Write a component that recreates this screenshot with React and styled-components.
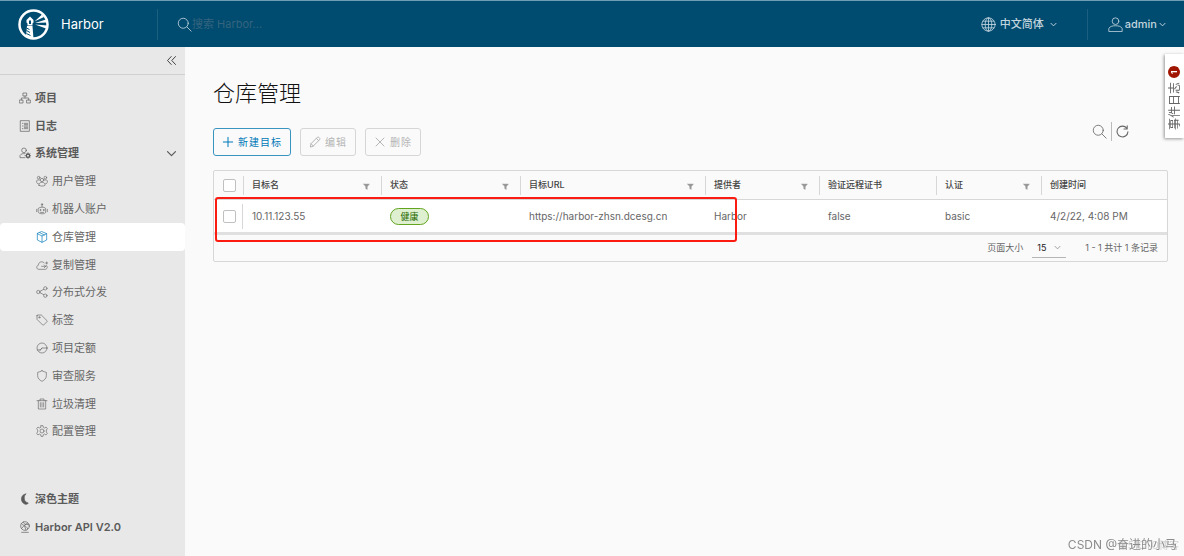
import React from 'react';
import styled, { createGlobalStyle, css } from 'styled-components';

const GlobalStyle = createGlobalStyle`
  *, *::before, *::after { box-sizing: border-box; }
  body {
    margin: 0;
    background: #fafafa;
    color: #666;
    font-family: Inter, "Noto Sans CJK SC", sans-serif;
    font-size: 11px;
    line-height: 16px;
  }
  button, input, select { font: inherit; color: inherit; margin: 0; }
  button { border: 0; background: none; padding: 0; cursor: pointer; }
  a { color: inherit; text-decoration: none; }
`;

const Svg = styled.svg`
  flex: none;
  display: block;
  width: ${(p) => p.$size || 12}px;
  height: ${(p) => p.$size || 12}px;
  fill: none;
  stroke: currentColor;
  stroke-width: ${(p) => p.$weight || 2};
  stroke-linecap: round;
  stroke-linejoin: round;
`;

const shapes = {
  organization: <><rect x="13" y="3" width="10" height="9" /><rect x="2" y="24" width="10" height="9" /><rect x="24" y="24" width="10" height="9" /><path d="M18 12v6M7 24v-6h22v6" /></>,
  list: <><rect x="5" y="2" width="26" height="32" /><path d="M10 10h2M10 18h2M10 26h2M16 10h10M16 14h10M16 18h10M16 22h10M16 26h10" strokeWidth="2" /></>,
  admin: <><circle cx="15" cy="10" r="7" /><path d="M17 32H3v-7c3-4 8-6 14-5" /><circle cx="27" cy="26" r="5" strokeWidth="4" /><path d="M27 17v3M27 32v3M18 26h3M33 26h3M21 20l2 2M31 30l2 2M21 32l2-2M31 22l2-2" /></>,
  users: <><circle cx="18" cy="15" r="5" /><circle cx="8" cy="8" r="4" /><circle cx="28" cy="8" r="4" /><path d="M9 31v-4c2-4 5-5 9-5s7 1 9 5v4c-5 3-13 3-18 0zM2 22v-5c2-2 5-3 9-2M34 22v-5c-2-2-5-3-9-2M4 25l3 1M32 25l-3 1" /></>,
  robot: <><path d="M7 16c5-5 17-5 22 0v12c-2 6-20 6-22 0zM18 12V6M2 19v7M34 19v7M13 28c3 1 7 1 10 0" /><circle cx="18" cy="4" r="2" /><circle cx="13" cy="21" r="1.5" /><circle cx="23" cy="21" r="1.5" /></>,
  cube: <path d="M18 2L32 8v19L18 34 4 27V8zM4 8l14 7 14-7M18 15v19M11 5l14 7" />,
  cloud: <><path d="M31 19c6 5 2 12-4 12H8C1 31 0 20 7 19c0-11 13-14 18-7" /><path d="M17 22h12M25 18l4 4-4 4M29 12h6M32 9v6" /></>,
  share: <><circle cx="7" cy="18" r="5" /><circle cx="28" cy="7" r="5" /><circle cx="28" cy="29" r="5" /><path d="M12 16l11-6M12 20l11 6" /></>,
  tag: <><path d="M3 5v11l17 17c1 1 2 1 3 0l10-10c1-1 1-2 0-3L16 3H5c-1 0-2 1-2 2z" /><circle cx="10" cy="10" r="2" /></>,
  gauge: <><circle cx="18" cy="18" r="15" /><path d="M4 24l9-1 5-5h15M11 27l7-9" /></>,
  shield: <path d="M18 2c4 3 9 4 13 5v10c0 8-5 13-13 17C10 30 5 25 5 17V7c4-1 9-2 13-5z" />,
  trash: <path d="M3 8h30M7 8v25h22V8M12 8V3h12v5M13 14v13M18 14v13M23 14v13" />,
  cog: <><path d="M15 2h6l1 5 4 2 4-3 4 5-3 4v6l3 4-4 5-5-3-3 2-1 5h-6l-1-5-4-2-4 3-4-5 3-4v-6l-3-4 4-5 5 3 3-2z" /><circle cx="18" cy="18" r="6" /></>,
  moon: <path d="M20 3C4 5 3 27 17 33c5 2 9 0 11-3C15 28 12 12 20 3z" fill="currentColor" />,
  api: <><circle cx="18" cy="15" r="13" /><path d="M7 8c5 7 13 3 19 15M8 22l8-9 10-7M13 3c-1 5 6 8 17 8M17 16l4 11M8 34h20" /></>,
  search: <><circle cx="15" cy="15" r="12" /><path d="M24 24l10 10" /></>,
  globe: <><circle cx="18" cy="18" r="16" /><ellipse cx="18" cy="18" rx="8" ry="16" /><path d="M18 2v32M2 18h32M5 10h26M5 26h26" /></>,
  user: <><circle cx="18" cy="10" r="8" /><path d="M2 34v-7c4-5 9-6 16-6s12 1 16 6v7z" /></>,
  chevron: <path d="M5 12l13 13 13-13" />,
  collapse: <path d="M17 5L5 18l12 13M31 5L19 18l12 13" />,
  refresh: <path d="M30 9A15 15 0 1 0 33 19M31 2v9h-9" />,
  plus: <path d="M18 4v28M4 18h28" />,
  pencil: <path d="M4 32l2-9L26 3c2-1 8 4 7 7L13 30zM22 7l7 7M6 23l7 7" />,
  times: <path d="M6 6l24 24M30 6L6 30" />,
  filter: <path d="M3 5h30L22 19v14l-8-4V19z" fill="currentColor" />,
};

function Icon({ name, size, weight }) {
  return <Svg viewBox="0 0 36 36" $size={size} $weight={weight} aria-hidden="true">{shapes[name]}</Svg>;
}

const Header = styled.header`
  display: flex;
  align-items: center;
  height: 47px;
  background: #004b70;
  border-top: 1px solid #6f9db3;
  color: #c3d5de;
`;

const Brand = styled.a`
  display: flex;
  align-items: center;
  gap: 12px;
  width: 157px;
  padding-left: 18px;
  color: #fff;
  font-size: 13px;
`;

const Logo = styled.svg`
  width: 31px;
  height: 31px;
`;

const Divider = styled.span`
  width: 1px;
  height: 31px;
  background: #1c5f80;
`;

const SearchBox = styled.label`
  display: flex;
  flex: 1;
  align-items: center;
  padding-left: 19px;
`;

const SearchInput = styled.input`
  width: 160px;
  padding: 0;
  border: 0;
  outline: 0;
  background: none;
  &::placeholder { color: #35647e; opacity: 1; }
`;

const HeaderMenu = styled.button`
  display: flex;
  align-items: center;
  gap: ${(p) => p.$gap}px;
  margin-right: ${(p) => p.$end}px;
  margin-left: 20px;
  font-weight: 500;
`;

const MenuText = styled.span`
  margin-right: ${(p) => p.$space || 0}px;
`;

const Body = styled.div`
  display: flex;
  min-height: calc(100vh - 47px);
`;

const Sidebar = styled.aside`
  display: flex;
  flex: none;
  flex-direction: column;
  width: 185px;
  background: #e8e8e8;
`;

const CollapseBar = styled.div`
  display: flex;
  align-items: center;
  justify-content: flex-end;
  height: 28px;
  padding-right: 8px;
  border-bottom: 1px solid #d0d0d0;
  color: #333;
`;

const Nav = styled.nav`
  display: grid;
  grid-auto-rows: 1fr;
  height: 65vh;
  min-height: 338px;
  margin-top: 9px;
`;

const NavFooter = styled.nav`
  display: grid;
  grid-auto-rows: 28px;
  margin-top: auto;
  padding-bottom: 15px;
`;

const NavItem = styled.a`
  display: flex;
  align-items: center;
  gap: 4px;
  padding: 0 8px 0 19px;
  color: #5a5a5a;
  font-weight: 600;
  ${(p) => p.$sub && css`
    padding-left: 36px;
    color: #666;
    font-weight: 400;
  `}
  ${(p) => p.$active && css`
    border-radius: 4px;
    background: #fff;
    svg { color: #0079b8; }
  `}
`;

const NavText = styled.span`
  flex: 1;
`;

const Main = styled.main`
  flex: 1;
  min-width: 0;
  padding: 30px 16px 0 28px;
`;

const Title = styled.h1`
  margin: 0;
  color: #111;
  font-size: 22px;
  font-weight: 300;
  line-height: 32px;
`;

const Toolbar = styled.div`
  display: flex;
  align-items: center;
  gap: 9px;
  margin: 19px 0 14px;
`;

const ActionButton = styled.button`
  display: flex;
  align-items: center;
  justify-content: center;
  gap: 4px;
  height: 28px;
  padding: 0 8px;
  border: 1px solid #3a94c0;
  border-radius: 3px;
  color: #0079b8;
  font-size: 10px;
  letter-spacing: 1px;
  &:disabled {
    border-color: #d6d6d6;
    color: #b5b5b5;
  }
`;

const Tools = styled.div`
  display: flex;
  align-self: flex-start;
  gap: 4px;
  margin: -6px 39px 0 auto;
  align-items: center;
`;

const ToolDivider = styled.span`
  width: 1px;
  height: 19px;
  background: #bbb;
`;

const Grid = styled.section`
  position: relative;
  border: 1px solid #d7d7d7;
  border-radius: 2px;
`;

const Table = styled.table`
  width: 100%;
  table-layout: fixed;
  border-collapse: separate;
  border-spacing: 0;
`;

const HeadCell = styled.th`
  height: 29px;
  padding: 0;
  border-bottom: 1px solid #d7d7d7;
  color: #444;
  font-size: 9px;
  font-weight: 500;
  text-align: left;
`;

const HeadContent = styled.div`
  display: flex;
  align-items: center;
  justify-content: space-between;
  height: 19px;
  padding: 0 11px 0 8px;
  border-left: 1px solid #d7d7d7;
  svg { color: #999; margin-top: 2px; }
`;

const Cell = styled.td`
  height: 35px;
  padding: 0 0 0 9px;
  border-bottom: 3px solid #e0e0e0;
  background: #fff;
  color: #666;
  font-size: 10px;
`;

const CheckSlot = styled.div`
  display: flex;
  align-items: center;
  height: 25px;
  border-right: ${(p) => (p.$line ? '1px solid #d7d7d7' : '0')};
  padding-left: ${(p) => (p.$line ? 0 : 9)}px;
`;

const Checkbox = styled.input`
  appearance: none;
  flex: none;
  width: 13px;
  height: 13px;
  margin: 0;
  border: 1px solid #c0c0c0;
  border-radius: 2px;
  background: #fff;
`;

const Status = styled.span`
  display: inline-block;
  width: 39px;
  border: 1px solid #62a420;
  border-radius: 9px;
  background: #dff0d0;
  color: #266900;
  font-size: 9px;
  line-height: 15px;
  text-align: center;
`;

const GridFooter = styled.footer`
  display: flex;
  align-items: center;
  justify-content: flex-end;
  height: 26px;
  padding-right: 9px;
  color: #666;
  font-size: 9px;
`;

const PageSize = styled.label`
  display: flex;
  align-items: center;
  gap: 9px;
  margin-right: 19px;
`;

const SelectWrap = styled.span`
  display: flex;
  align-items: center;
  width: 34px;
  height: 20px;
  border-bottom: 1px solid #b5b5b5;
  svg { margin-left: -12px; pointer-events: none; color: #888; }
`;

const Select = styled.select`
  appearance: none;
  width: 34px;
  padding: 0 0 0 5px;
  border: 0;
  outline: 0;
  background: none;
  color: #222;
`;

const Highlight = styled.div`
  position: absolute;
  top: 26px;
  left: 1px;
  width: 522px;
  height: 45px;
  border: 2px solid #fb1b10;
  border-radius: 3px;
  pointer-events: none;
`;

const EventTab = styled.button`
  position: fixed;
  top: 54px;
  right: 0;
  display: flex;
  align-items: center;
  gap: 4px;
  width: 19px;
  padding: 8px 0 12px;
  background: #fff;
  box-shadow: 1px -1px 3px rgba(0, 0, 0, 0.4);
  writing-mode: vertical-rl;
  text-orientation: sideways;
  transform: rotate(180deg);
  font-size: 12px;
  line-height: 19px;
`;

const Badge = styled.span`
  width: 12px;
  height: 12px;
  border-radius: 50%;
  background: #a01500;
  color: #fff;
  font-size: 8px;
  font-weight: 700;
  line-height: 12px;
  text-align: center;
`;

const Watermark = styled.div`
  position: fixed;
  right: 7px;
  bottom: 2px;
  color: #8c8c8c;
  font-size: 12px;
  line-height: 18px;
`;

const GhostMark = styled(Watermark)`
  right: 5px;
  color: #d0d0d0;
  font-size: 10px;
`;

const mainNav = [
  { icon: 'organization', text: '项目' },
  { icon: 'list', text: '日志' },
  { icon: 'admin', text: '系统管理', open: true },
  { icon: 'users', text: '用户管理', sub: true },
  { icon: 'robot', text: '机器人账户', sub: true },
  { icon: 'cube', text: '仓库管理', sub: true, active: true },
  { icon: 'cloud', text: '复制管理', sub: true },
  { icon: 'share', text: '分布式分发', sub: true },
  { icon: 'tag', text: '标签', sub: true },
  { icon: 'gauge', text: '项目定额', sub: true },
  { icon: 'shield', text: '审查服务', sub: true },
  { icon: 'trash', text: '垃圾清理', sub: true },
  { icon: 'cog', text: '配置管理', sub: true },
];

const footNav = [
  { icon: 'moon', text: '深色主题' },
  { icon: 'api', text: 'Harbor API V2.0' },
];

const columns = [
  { text: '目标名', width: 138, filter: true },
  { text: '状态', width: 139, filter: true },
  { text: '目标URL', width: 185, filter: true },
  { text: '提供者', width: 114, filter: true },
  { text: '验证远程证书', width: 117 },
  { text: '认证', width: 105, filter: true },
  { text: '创建时间', width: 126 },
];

function NavEntry({ item }) {
  return (
    <NavItem href="#" $sub={item.sub} $active={item.active} aria-current={item.active ? 'page' : undefined}>
      <Icon name={item.icon} />
      <NavText>{item.text}</NavText>
      {item.open && <Icon name="chevron" size={11} weight={4} />}
    </NavItem>
  );
}

export default function App() {
  return (
    <>
      <GlobalStyle />
      <Header>
        <Brand href="#">
          <Logo viewBox="0 0 62 62" aria-hidden="true">
            <circle cx="31" cy="31" r="28" fill="none" stroke="#fff" strokeWidth="5" />
            <path d="M17 27v-5l7-7 7 7v5l-2 2v4H19v-4z" fill="#fff" />
            <path d="M22 23h4v7h-4z" fill="#004b70" />
            <path d="M18 34h11l2 26-15-5z" fill="#fff" />
            <path d="M17 38l6 3M17 43l7 4M17 49l8 4" stroke="#004b70" strokeWidth="2" />
            <path d="M33 25l15-14 4 5zM34 28l22-7 2 6zM34 31l25 2-3 6z" fill="#fff" />
          </Logo>
          Harbor
        </Brand>
        <Divider />
        <SearchBox>
          <Icon name="search" size={15} weight={2} />
          <SearchInput type="search" placeholder="搜索 Harbor..." aria-label="搜索 Harbor" />
        </SearchBox>
        <HeaderMenu type="button" $gap={4} $end={30}>
          <Icon name="globe" size={15} />
          <MenuText $space={2}>中文简体</MenuText>
          <Icon name="chevron" size={7} weight={5} />
        </HeaderMenu>
        <Divider />
        <HeaderMenu type="button" $gap={2} $end={18}>
          <Icon name="user" size={15} />
          <MenuText>admin</MenuText>
          <Icon name="chevron" size={7} weight={5} />
        </HeaderMenu>
      </Header>
      <Body>
        <Sidebar>
          <CollapseBar>
            <button type="button" aria-label="收起"><Icon name="collapse" size={11} weight={3} /></button>
          </CollapseBar>
          <Nav>{mainNav.map((item) => <NavEntry key={item.text} item={item} />)}</Nav>
          <NavFooter>{footNav.map((item) => <NavEntry key={item.text} item={item} />)}</NavFooter>
        </Sidebar>
        <Main>
          <Title>仓库管理</Title>
          <Toolbar>
            <ActionButton type="button"><Icon name="plus" weight={3} />新建目标</ActionButton>
            <ActionButton type="button" disabled><Icon name="pencil" weight={3} />编辑</ActionButton>
            <ActionButton type="button" disabled><Icon name="times" weight={3} />删除</ActionButton>
            <Tools>
              <button type="button" aria-label="搜索"><Icon name="search" size={15} /></button>
              <ToolDivider />
              <button type="button" aria-label="刷新"><Icon name="refresh" size={13} weight={3} /></button>
            </Tools>
          </Toolbar>
          <Grid>
            <Table>
              <colgroup>
                <col width="29" />
                {columns.map((c) => <col key={c.text} width={c.width} />)}
              </colgroup>
              <thead>
                <tr>
                  <HeadCell>
                    <CheckSlot><Checkbox type="checkbox" aria-label="全选" /></CheckSlot>
                  </HeadCell>
                  {columns.map((c) => (
                    <HeadCell key={c.text}>
                      <HeadContent>{c.text}{c.filter && <Icon name="filter" size={7} />}</HeadContent>
                    </HeadCell>
                  ))}
                </tr>
              </thead>
              <tbody>
                <tr>
                  <Cell><CheckSlot $line><Checkbox type="checkbox" aria-label="选择 10.11.123.55" /></CheckSlot></Cell>
                  <Cell>10.11.123.55</Cell>
                  <Cell><Status>健康</Status></Cell>
                  <Cell>https://harbor-zhsn.dcesg.cn</Cell>
                  <Cell>Harbor</Cell>
                  <Cell>false</Cell>
                  <Cell>basic</Cell>
                  <Cell>4/2/22, 4:08 PM</Cell>
                </tr>
              </tbody>
            </Table>
            <GridFooter>
              <PageSize>
                页面大小
                <SelectWrap>
                  <Select defaultValue="15"><option>15</option><option>25</option><option>50</option></Select>
                  <Icon name="chevron" size={7} weight={4} />
                </SelectWrap>
              </PageSize>
              1 - 1 共计 1 条记录
            </GridFooter>
            <Highlight />
          </Grid>
        </Main>
      </Body>
      <EventTab type="button">事件日志<Badge>1</Badge></EventTab>
      <GhostMark>@51CTO博客</GhostMark>
      <Watermark>CSDN @奋进的小马</Watermark>
    </>
  );
}
